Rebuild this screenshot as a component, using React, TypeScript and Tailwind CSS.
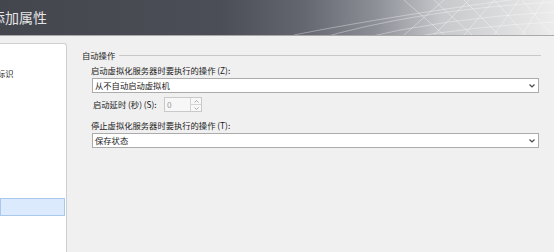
import React from 'react';

const font = { fontFamily: '"Noto Sans CJK SC", "Microsoft YaHei", sans-serif' };

function Chevron() {
    return (
        <svg width="6" height="4" viewBox="0 0 6 4" className="shrink-0">
            <polyline points="0.5,0.5 3,3 5.5,0.5" fill="none" stroke="#4a4a4a" strokeWidth="1.2" />
        </svg>
    );
}

function Select({ value }: { value: string }) {
    return (
        <div className="flex items-center justify-between h-[15px] w-[447px] ml-[1px] bg-white border border-[#ababab] pl-[2px] pr-[3px]">
            <span className="text-[8.3px] leading-none text-[#1b1b1b]">{value}</span>
            <Chevron />
        </div>
    );
}

function SpinBox() {
    return (
        <div className="flex h-[15px] w-[38px] border border-[#c9c9c9] bg-[#f7f7f7]">
            <span className="flex-1 pl-[2px] text-[8.3px] leading-[13px] text-[#9a9a9a]">0</span>
            <div className="flex flex-col w-[11px] border-l border-[#d4d4d4]">
                <div className="flex-1 flex items-center justify-center border-b border-[#d4d4d4]">
                    <svg width="5" height="3" viewBox="0 0 5 3">
                        <polyline points="0.5,2.5 2.5,0.5 4.5,2.5" fill="none" stroke="#a8a8a8" strokeWidth="1" />
                    </svg>
                </div>
                <div className="flex-1 flex items-center justify-center">
                    <svg width="5" height="3" viewBox="0 0 5 3">
                        <polyline points="0.5,0.5 2.5,2.5 4.5,0.5" fill="none" stroke="#a8a8a8" strokeWidth="1" />
                    </svg>
                </div>
            </div>
        </div>
    );
}

export default function App() {
    return (
        <div className="w-[554px] h-[252px] overflow-hidden bg-[#f0f0f0] flex flex-col" style={font}>
            {/* Header */}
            <div className="relative h-[36px] shrink-0 border-b border-[#a9a9a9] bg-[linear-gradient(90deg,#44464e_0%,#4b4e56_40%,#646770_55%,#8e9098_68%,#c8c9cc_80%,#ececec_100%)] overflow-hidden">
                <svg className="absolute right-0 top-0" width="260" height="35" viewBox="0 0 260 35">
                    <g fill="none" stroke="#ffffff" strokeOpacity="0.35" strokeWidth="1">
                        <path d="M20 40 Q120 10 260 2" />
                        <path d="M60 40 Q150 18 260 12" />
                        <path d="M100 40 Q180 26 260 22" />
                        <path d="M0 35 Q100 15 260 -6" />
                        <path d="M110 35 L150 0" />
                        <path d="M140 35 L175 0" />
                        <path d="M170 35 L200 0" />
                        <path d="M200 35 L225 0" />
                        <path d="M228 35 L250 0" />
                        <path d="M110 0 L150 35" />
                        <path d="M140 0 L178 35" />
                        <path d="M170 0 L205 35" />
                        <path d="M200 0 L232 35" />
                        <path d="M228 0 L258 35" />
                    </g>
                </svg>
                <div className="relative ml-[-9px] mt-[7px] text-[14px] leading-[20px] text-[#e4e4e4]">添加属性</div>
            </div>

            {/* Body */}
            <div className="flex flex-1 min-h-0">
                {/* Left nav */}
                <div className="w-[68px] mt-[7px] bg-white border-t border-r border-[#cfcfcf] rounded-tr-[3px] flex flex-col">
                    <div className="mt-[23px] ml-[-3px] text-[8.3px] leading-[12px] text-[#1b1b1b] whitespace-nowrap">标识</div>
                    <div className="mt-[119px] mr-[1px] h-[18px] bg-[#dceafd] border border-[#aac8ef]" />
                </div>

                {/* Right content */}
                <div className="flex-1 pl-[15px] pr-[13px]">
                    <div className="mt-[12px] flex items-center h-[14px]">
                        <span className="text-[8.3px] leading-none text-[#1b1b1b]">自动操作</span>
                        <div className="flex-1 ml-[4px] h-px bg-[#c8c8c8]" />
                    </div>
                    <div className="pl-[9px] pr-[2px]">
                        <div className="mt-[1px] h-[14px] flex items-center text-[8.3px] text-[#1b1b1b]">启动虚拟化服务器时要执行的操作 (Z):</div>
                        <div className="mt-[1px]">
                            <Select value="从不自动启动虚拟机" />
                        </div>
                        <div className="mt-[4px] flex items-center h-[15px]">
                            <span className="ml-[2px] w-[71px] text-[8.3px] text-[#1b1b1b]">启动延时 (秒) (S):</span>
                            <SpinBox />
                        </div>
                        <div className="mt-[6px] h-[14px] flex items-center text-[8.3px] text-[#1b1b1b]">停止虚拟化服务器时要执行的操作 (T):</div>
                        <div className="mt-[1px]">
                            <Select value="保存状态" />
                        </div>
                    </div>
                </div>
            </div>
        </div>
    );
}
